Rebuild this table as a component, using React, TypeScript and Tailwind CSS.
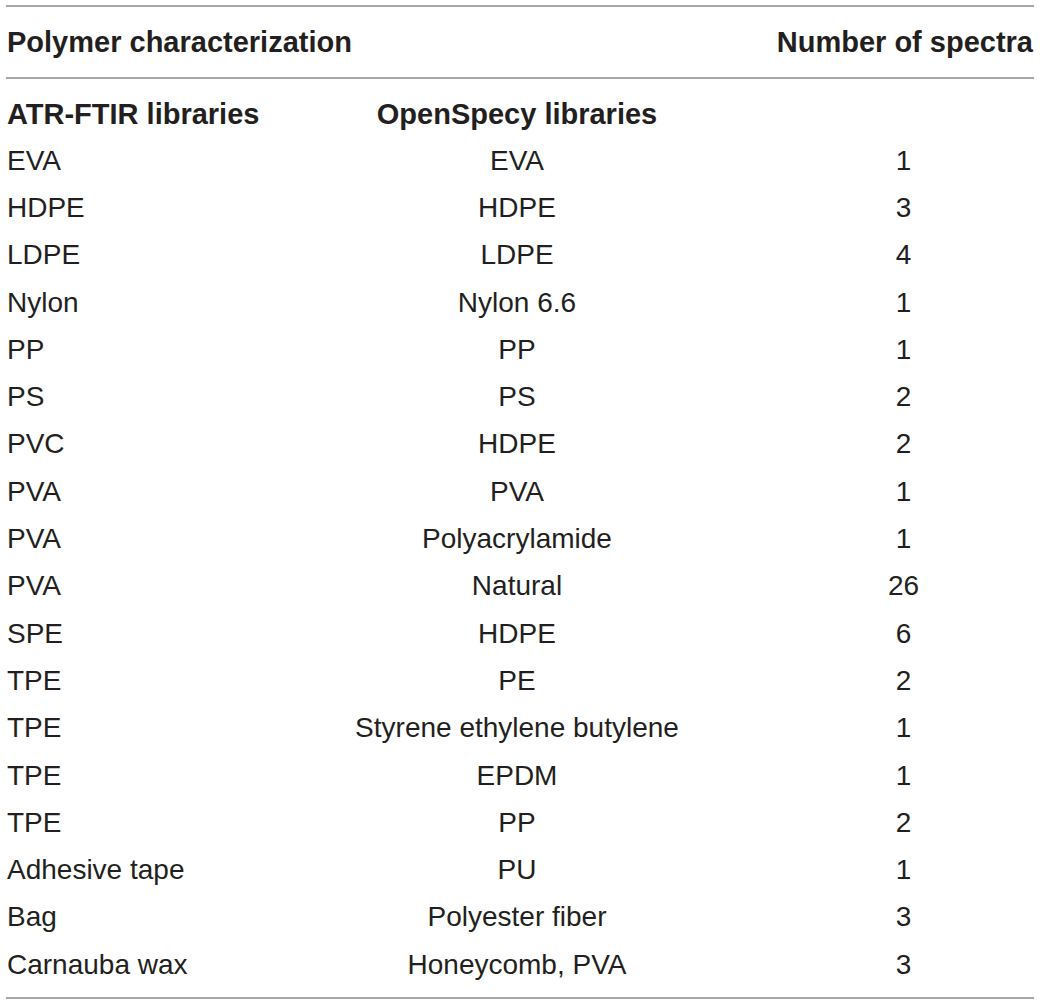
const rows: [string, string, string][] = [
  ["EVA", "EVA", "1"],
  ["HDPE", "HDPE", "3"],
  ["LDPE", "LDPE", "4"],
  ["Nylon", "Nylon 6.6", "1"],
  ["PP", "PP", "1"],
  ["PS", "PS", "2"],
  ["PVC", "HDPE", "2"],
  ["PVA", "PVA", "1"],
  ["PVA", "Polyacrylamide", "1"],
  ["PVA", "Natural", "26"],
  ["SPE", "HDPE", "6"],
  ["TPE", "PE", "2"],
  ["TPE", "Styrene ethylene butylene", "1"],
  ["TPE", "EPDM", "1"],
  ["TPE", "PP", "2"],
  ["Adhesive tape", "PU", "1"],
  ["Bag", "Polyester fiber", "3"],
  ["Carnauba wax", "Honeycomb, PVA", "3"],
];

export default function App() {
  return (
    <main className="w-[1040px] h-[1006px] bg-white pt-[5px] pl-[6px] pr-[6px] font-['Liberation_Sans',Arial,sans-serif] text-[#231f20]">
      <table className="w-full border-collapse text-[28px] leading-none">
        <colgroup>
          <col className="w-[255px]" />
          <col className="w-[512px]" />
          <col className="w-[261px]" />
        </colgroup>
        <thead>
          <tr className="h-[72px] border-t-2 border-b-2 border-[#a7a7a7] text-[29px]">
            <th colSpan={2} className="text-left font-bold pl-[1px]">Polymer characterization</th>
            <th className="text-right font-bold pr-[1px]">Number of spectra</th>
          </tr>
        </thead>
        <tbody className="border-b-2 border-[#a7a7a7]">
          <tr className="h-[59px] text-[29px]">
            <td className="pl-[1px] pt-[12px] font-bold whitespace-nowrap">ATR-FTIR libraries</td>
            <td className="pt-[12px] text-center font-bold">OpenSpecy libraries</td>
            <td />
          </tr>
          {rows.map(([a, b, c], i) => (
            <tr key={i} className="h-[47.3px]">
              <td className="pl-[1px]">{a}</td>
              <td className="text-center">{b}</td>
              <td className="text-center">{c}</td>
            </tr>
          ))}
          <tr className="h-[10px]">
            <td colSpan={3} />
          </tr>
        </tbody>
      </table>
    </main>
  );
}
